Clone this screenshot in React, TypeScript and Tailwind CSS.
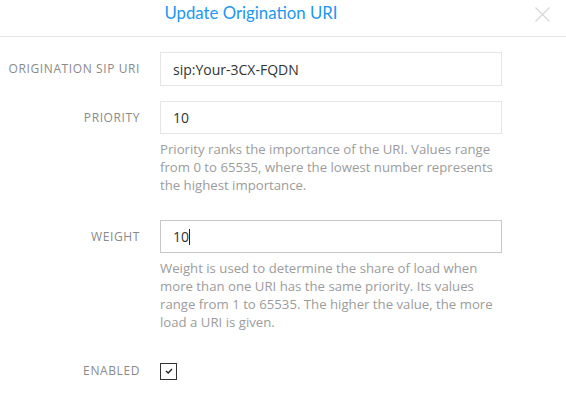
import React from "react";

function Label({ children }: { children: React.ReactNode }) {
  return (
    <div className="w-[140px] shrink-0 text-right text-[12px] tracking-[0.6px] text-[#8a8a8a] uppercase" style={{ fontFamily: '"Open Sans", sans-serif' }}>
      {children}
    </div>
  );
}

export default function App() {
  return (
    <div className="w-[566px] h-[407px] bg-white overflow-hidden" style={{ fontFamily: '"Open Sans", "Noto Sans", sans-serif' }}>
      <div className="relative h-[37px] border-b border-[#e3e3e3] flex items-center">
        <div className="w-[502px] text-center text-[16.8px] text-[#2196f3] leading-none -mt-[9px]" style={{ fontFamily: '"Lato", sans-serif' }}>
          Update Origination URI
        </div>
        <svg className="absolute left-[535px] top-[7px]" width="15" height="15" viewBox="0 0 15 15">
          <path d="M0.5 0.5 L14.5 14.5 M14.5 0.5 L0.5 14.5" stroke="#d6d6d6" strokeWidth="1.2" fill="none" />
        </svg>
      </div>

      <div className="pt-[15px] flex flex-col">
        <div className="flex items-center gap-[20px]">
          <Label>Origination SIP URI</Label>
          <div className="w-[342px] h-[34px] border border-[#e6e6e6] flex items-center px-[12px] text-[14px] text-[#333]">
            sip:Your-3CX-FQDN
          </div>
        </div>

        <div className="flex items-start gap-[20px] mt-[15px]">
          <div className="h-[33px] flex items-center"><Label>Priority</Label></div>
          <div className="w-[342px]">
            <div className="h-[33px] border border-[#e6e6e6] flex items-center px-[12px] text-[14px] text-[#333]">10</div>
            <p className="mt-[6px] text-[13.2px] leading-[18px] text-[#9c9c9c] whitespace-nowrap">
              Priority ranks the importance of the URI. Values range
              <br />
              from 0 to 65535, where the lowest number represents
              <br />
              the highest importance.
            </p>
          </div>
        </div>

        <div className="flex items-start gap-[20px] mt-[26px]">
          <div className="h-[33px] flex items-center"><Label>Weight</Label></div>
          <div className="w-[342px]">
            <div className="h-[33px] border border-[#c8c8c8] flex items-center px-[12px] text-[14px] text-[#333]">
              10<span className="inline-block w-px h-[16px] bg-[#222]"></span>
            </div>
            <p className="mt-[6px] text-[13.2px] leading-[18px] text-[#9c9c9c] whitespace-nowrap">
              Weight is used to determine the share of load when
              <br />
              more than one URI has the same priority. Its values
              <br />
              range from 1 to 65535. The higher the value, the more
              <br />
              load a URI is given.
            </p>
          </div>
        </div>

        <div className="flex items-center gap-[20px] mt-[31px]">
          <Label>Enabled</Label>
          <div className="w-[17px] h-[17px] border border-[#333] flex items-center justify-center">
            <svg width="8" height="6" viewBox="0 0 8 6">
              <path d="M1 3 L3.2 5 L7 1" stroke="#222" strokeWidth="1.4" fill="none" />
            </svg>
          </div>
        </div>
      </div>
    </div>
  );
}
